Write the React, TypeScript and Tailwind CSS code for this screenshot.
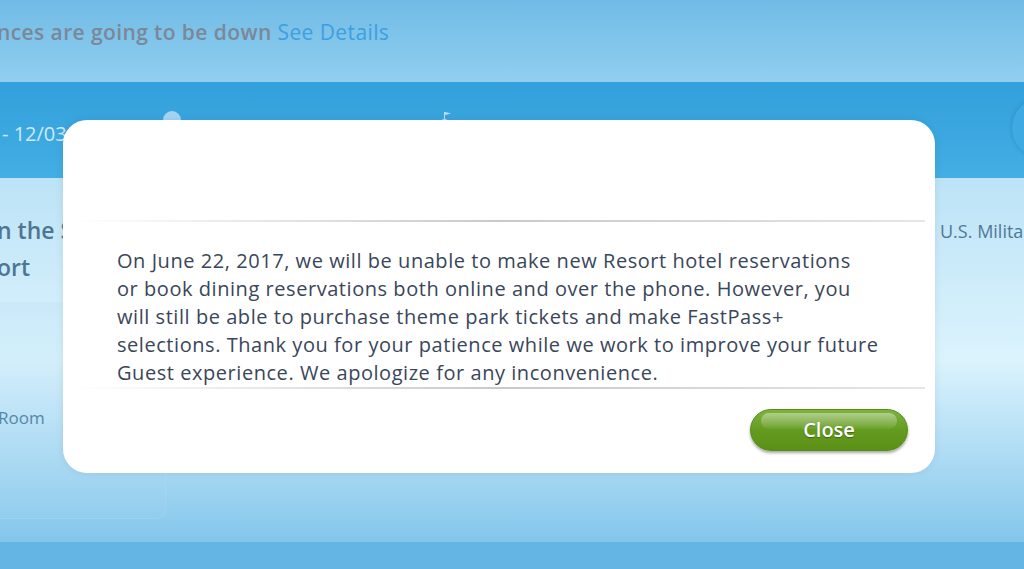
import React from "react";

const font = { fontFamily: "'Open Sans', 'Noto Sans', 'Liberation Sans', sans-serif" };

function Divider() {
  return (
    <div className="mx-[10px] h-[2px] bg-gradient-to-r from-transparent via-[#c9c9c9] to-[#e6e6e6]" />
  );
}

export default function App() {
  return (
    <div className="relative w-[1024px] h-[569px] overflow-hidden" style={font}>
      {/* top alert banner */}
      <div className="h-[82px] bg-gradient-to-b from-[#70bbe6] to-[#91cfef] flex items-start pt-[18px]">
        <div className="ml-[-3px] text-[21px] leading-[28px] tracking-[0.4px] whitespace-nowrap">
          <span className="font-semibold text-[#7b8899]">nces are going to be down</span>{" "}
          <span className="text-[#3c9fe0]">See Details</span>
        </div>
      </div>

      {/* blue bar */}
      <div className="relative h-[96px] bg-gradient-to-b from-[#32a0dc] to-[#43aee3] flex items-center">
        <div className="ml-[2px] mt-[8px] text-[20px] text-[#cfe9f8] whitespace-nowrap">- 12/03/</div>
        <div className="absolute left-[163px] top-[29px] w-[18px] h-[18px] rounded-full bg-[#a3d5f2]" />
        <div className="absolute left-[441px] top-[29px] w-[12px] h-[12px]">
          <svg width="12" height="12" viewBox="0 0 12 12">
            <rect x="3" y="1" width="1" height="8" fill="#b9e0f6" />
            <path d="M4 1 L10 2.5 L4 4 Z" fill="#b9e0f6" />
            <ellipse cx="3.5" cy="10" rx="3" ry="2" fill="#b9e0f6" />
          </svg>
        </div>
        <div className="absolute left-[1012px] top-[16px] w-[60px] h-[60px] rounded-full bg-[#3faae1] shadow-[0_0_4px_rgba(0,60,110,0.25)]" />
      </div>

      {/* main content area */}
      <div className="h-[364px] bg-gradient-to-b from-[#bce3f6] via-[#dbf3fd] to-[#83c6eb] flex">
        <div className="w-[166px] flex flex-col">
          <div className="pt-[34px] text-[23px] leading-[37px] font-semibold text-[#4e7592] whitespace-nowrap ml-[-3px]">
            <div>n the S</div>
            <div>ort</div>
          </div>
          <div className="mt-[16px] h-[217px] rounded-br-[10px] bg-[#a5d8f2]/15 border-r border-b border-[#b4def4]/30 pt-[103px]">
            <div className="text-[17px] text-[#5786a6] ml-[-2px]">Room</div>
          </div>
        </div>
        <div className="flex-1 flex justify-end">
          <div className="pt-[40px] w-[84px] text-[18px] text-[#4e7898] whitespace-nowrap">U.S. Milita</div>
        </div>
      </div>

      {/* bottom bar */}
      <div className="h-[27px] bg-[#64b5e3]" />

      {/* modal */}
      <div className="absolute left-[63px] top-[120px] w-[872px] h-[353px] rounded-[24px] bg-white shadow-[0_0_8px_rgba(0,0,0,0.08)] flex flex-col">
        <div className="h-[100px]" />
        <Divider />
        <div className="pl-[54px] pt-[25px] text-[20px] leading-[28px] tracking-[0.55px] text-[#3a465a] whitespace-nowrap">
          <p>
            On June 22, 2017, we will be unable to make new Resort hotel reservations
            <br />
            or book dining reservations both online and over the phone. However, you
            <br />
            will still be able to purchase theme park tickets and make FastPass+
            <br />
            selections. Thank you for your patience while we work to improve your future
            <br />
            Guest experience. We apologize for any inconvenience.
          </p>
        </div>
        <Divider />
        <div className="flex-1 flex justify-end items-start pt-[20px] pr-[27px]">
          <button className="relative w-[158px] h-[42px] rounded-full bg-gradient-to-b from-[#7fb23f] via-[#639b1f] to-[#5a9016] border border-[#578c17] shadow-[0_2px_3px_rgba(0,0,0,0.35)] text-white text-[20px] font-semibold [text-shadow:0_1px_1px_rgba(0,0,0,0.35)] overflow-hidden">
            <span className="absolute left-[10px] right-[10px] top-[3px] h-[16px] rounded-full bg-gradient-to-b from-white/40 to-white/5" />
            <span className="relative">Close</span>
          </button>
        </div>
      </div>
    </div>
  );
}
